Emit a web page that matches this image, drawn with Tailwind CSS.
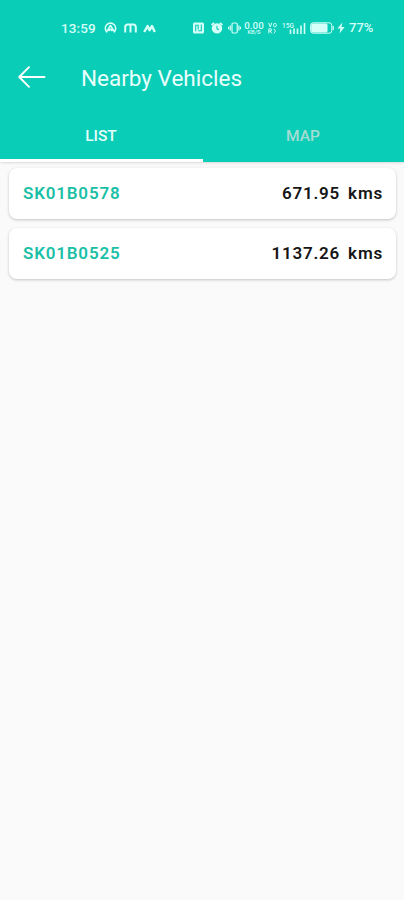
<!DOCTYPE html>
<html lang="en">
<head>
  <meta charset="UTF-8">
  <meta name="viewport" content="width=device-width, initial-scale=1.0">
  <title>Nearby Vehicles</title>
  <script src="https://cdn.jsdelivr.net/npm/@tailwindcss/browser@4"></script>
</head>
<body class="bg-[#fafafa] font-['Roboto',sans-serif] min-h-screen overflow-hidden">
  <header class="bg-[#0acdb7] h-[162px] flex flex-col text-white shadow-sm">

    <!-- Status bar -->
    <div class="h-14 pl-[61px] pr-[30px] flex items-center text-[#d5fff9]">
      <span class="w-[43px] shrink-0 text-[13.5px] font-medium tracking-[0.1px]">13:59</span>
      <svg class="w-[13px] h-3 shrink-0" viewBox="0 0 13 12" fill="none" stroke="currentColor" stroke-width="1.6">
        <path d="M3.2 10.3A5.2 5.2 0 1 1 9.8 10.3M6.5 3.4L3.3 9M6.5 3.4L9.7 9M4.6 8.8L6.5 7.2L8.4 8.8" />
      </svg>
      <svg class="w-[13px] h-3 ml-[7px] shrink-0" viewBox="0 0 13 12" fill="none" stroke="currentColor" stroke-width="2">
        <path d="M1.2 10.5V5.2Q1.2 2.5 3.8 2.5H9.2Q11.8 2.5 11.8 5.2V10.5M6.5 2.8V10.5" />
      </svg>
      <svg class="w-[13px] h-3 ml-[6px] shrink-0" viewBox="0 0 13 12" fill="none" stroke="currentColor" stroke-width="2.4" stroke-linejoin="round">
        <path d="M1.2 10L4.6 4L6.6 8.2L9 4L11.8 10" />
      </svg>

      <div class="ml-auto flex items-center shrink-0">
        <svg class="w-[11px] h-3" viewBox="0 0 11 12" fill="none" stroke="currentColor">
          <rect x="0" y="0.6" width="11" height="10.8" rx="1.5" fill="currentColor" stroke="none" />
          <path class="stroke-[#0acdb7]" d="M2.7 9.3V3.2H5.2V7.6M8.3 2.6V8.7H5.2" stroke-width="1.1" />
        </svg>
        <svg class="w-3 h-3 ml-[7px]" viewBox="0 0 12 12" fill="none" stroke="currentColor">
          <circle cx="6" cy="6.4" r="5.2" fill="currentColor" stroke="none" />
          <path d="M0.6 3L3.2 0.9M11.4 3L8.8 0.9" stroke-width="1.8" />
          <path class="stroke-[#0acdb7]" d="M6 3.8V6.8L8 7.8" stroke-width="1.1" />
        </svg>
        <svg class="w-[13px] h-3 ml-[5px]" viewBox="0 0 13 12" fill="none" stroke="currentColor" stroke-width="1.2">
          <rect x="4" y="1" width="5.2" height="10" rx="1.2" />
          <path d="M2.3 3.5V8.5M0.6 4.8V7.2M10.9 3.5V8.5M12.5 4.8V7.2" />
        </svg>
        <svg class="w-5 h-[18px] ml-[3px] overflow-visible" viewBox="0 0 20 18" fill="currentColor" font-weight="500" text-anchor="middle">
          <text x="10" y="9.6" font-size="9.8">0.00</text>
          <text x="10" y="15.4" font-size="5.8">KB/S</text>
        </svg>
        <svg class="w-[9px] h-3 ml-[4px]" viewBox="0 0 9 12" fill="none" stroke="currentColor">
          <path d="M0.7 0.8L2.3 5L3.8 0.8M0.8 11.4V6.8H3.2V9H0.8M2.2 9L3.8 11.4M6 6.8Q8.8 9 6 11.4" />
          <rect x="5.6" y="1.4" width="2.6" height="3.4" rx="1" />
        </svg>
        <svg class="w-6 h-[13px] ml-[5px] overflow-visible" viewBox="0 0 24 13" fill="none" stroke="currentColor">
          <text x="0" y="5.5" font-size="6.5" font-weight="500" fill="currentColor" stroke="none">15G</text>
          <path d="M8.5 7.5V12M12 6.5V12M15.5 6.5V12M19 3.5V12M22.5 1V12" stroke-width="1.6" />
        </svg>
        <svg class="w-6 h-3 ml-[4px]" viewBox="0 0 24 12" fill="none" stroke="currentColor">
          <rect x="0.6" y="0.8" width="21.2" height="10.4" rx="2.5" />
          <rect x="1.2" y="1.4" width="16.3" height="9.2" rx="1.5" fill="currentColor" stroke="none" />
          <path d="M23.2 4V8" stroke-width="1.2" />
        </svg>
        <svg class="w-2 h-3 ml-[3px]" viewBox="0 0 8 12" fill="currentColor">
          <path d="M5.3 0.6L0.5 6.6H3.4L2.6 11.4L7.6 5.1H4.5Z" />
        </svg>
        <span class="ml-[4px] w-[25px] text-[13px] font-medium">77%</span>
      </div>
    </div>

    <!-- Title bar -->
    <div class="h-[46px] pl-[18px] flex items-center">
      <svg class="w-7 h-6 shrink-0 -mt-1" viewBox="0 0 28 24" fill="none" stroke="currentColor" stroke-width="1.9" stroke-linecap="round" stroke-linejoin="round">
        <path d="M26.5 12H1.2M11 2.2L1.2 12L11 21.8" />
      </svg>
      <h1 class="ml-[35px] -mt-[2px] text-[22.5px] leading-7 text-[#e9fffc]">Nearby Vehicles</h1>
    </div>

    <!-- Tabs -->
    <nav class="flex-1 grid grid-cols-[203px_1fr] text-[15.5px] font-medium">
      <a class="flex items-center justify-center pt-[12px] pr-px border-b-[3px] border-white text-[#e6fffb]">LIST</a>
      <a class="flex items-center justify-center pb-[3px] pt-[12px] pr-px text-[#a5dcd3]">MAP</a>
    </nav>
  </header>

  <main class="pt-1.5 pl-[9px] pr-2 flex flex-col gap-[9px] text-[17px] font-semibold tracking-[0.8px]">
    <div class="h-[51px] pl-3.5 pr-[13px] flex items-center justify-between bg-white rounded-lg shadow-[0_1px_3px_rgba(0,0,0,0.22)]">
      <span class="text-[#1bbfa6]">SK01B0578</span>
      <span class="flex gap-2 text-[#161616]"><span>671.95</span><span>kms</span></span>
    </div>
    <div class="h-[51px] pl-3.5 pr-[13px] flex items-center justify-between bg-white rounded-lg shadow-[0_1px_3px_rgba(0,0,0,0.22)]">
      <span class="text-[#1bbfa6]">SK01B0525</span>
      <span class="flex gap-2 text-[#161616]"><span>1137.26</span><span>kms</span></span>
    </div>
  </main>
</body>
</html>
